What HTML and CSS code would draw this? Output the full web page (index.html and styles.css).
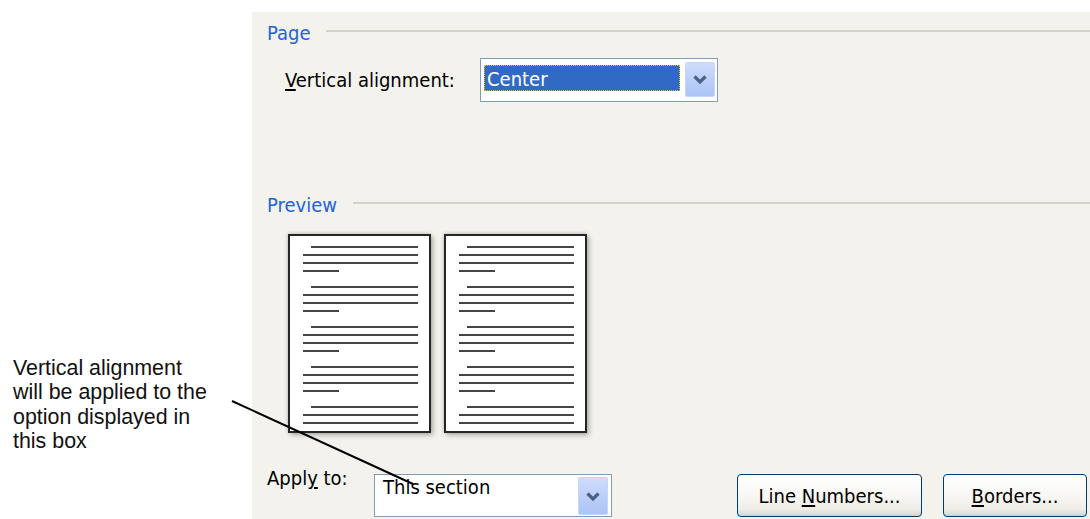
FILE: index.html
```html
<!DOCTYPE html>
<html lang="en">
<head>
<meta charset="utf-8">
<title>Page Setup – Layout</title>
<link rel="stylesheet" href="styles.css">
</head>
<body>
  <aside class="note">
    <p class="note-text">Vertical alignment<br>will be applied to the<br>option displayed in<br>this box</p>
  </aside>

  <main class="dialog">
    <section class="group">
      <div class="group-head"><span class="group-title">Page</span><i class="group-rule"></i></div>
      <div class="field-row">
        <label class="field-label"><u>V</u>ertical alignment:</label>
        <div class="combo combo-focus">
          <span class="combo-selection">Center</span>
          <span class="combo-button">
            <svg width="16" height="11" viewBox="0 0 16 11"><path d="M2.5 2.5 L8 8 L13.5 2.5" fill="none" stroke="#4d6185" stroke-width="3.2"/></svg>
          </span>
        </div>
      </div>
    </section>

    <section class="group group-preview">
      <div class="group-head"><span class="group-title">Preview</span><i class="group-rule"></i></div>
      <div class="previews">
        <div class="sheet">
          <div class="para"><i class="ln indent"></i><i class="ln"></i><i class="ln"></i><i class="ln short"></i></div>
          <div class="para"><i class="ln indent"></i><i class="ln"></i><i class="ln"></i><i class="ln short"></i></div>
          <div class="para"><i class="ln indent"></i><i class="ln"></i><i class="ln"></i><i class="ln short"></i></div>
          <div class="para"><i class="ln indent"></i><i class="ln"></i><i class="ln"></i><i class="ln short"></i></div>
          <div class="para"><i class="ln indent"></i><i class="ln"></i><i class="ln"></i></div>
        </div>
        <div class="sheet">
          <div class="para"><i class="ln indent"></i><i class="ln"></i><i class="ln"></i><i class="ln short"></i></div>
          <div class="para"><i class="ln indent"></i><i class="ln"></i><i class="ln"></i><i class="ln short"></i></div>
          <div class="para"><i class="ln indent"></i><i class="ln"></i><i class="ln"></i><i class="ln short"></i></div>
          <div class="para"><i class="ln indent"></i><i class="ln"></i><i class="ln"></i><i class="ln short"></i></div>
          <div class="para"><i class="ln indent"></i><i class="ln"></i><i class="ln"></i></div>
        </div>
      </div>
    </section>

    <div class="footer">
      <label class="apply-label">Appl<u>y</u> to:</label>
      <div class="combo combo-apply">
        <span class="combo-text">This section</span>
        <span class="combo-button">
          <svg width="16" height="11" viewBox="0 0 16 11"><path d="M2.5 2.5 L8 8 L13.5 2.5" fill="none" stroke="#4d6185" stroke-width="3.2"/></svg>
        </span>
      </div>
      <button class="btn btn-lines" type="button">Line <u>N</u>umbers...</button>
      <button class="btn btn-borders" type="button"><u>B</u>orders...</button>
    </div>
  </main>

  <svg class="pointer" width="1090" height="519" viewBox="0 0 1090 519">
    <line x1="232" y1="401" x2="413" y2="484" stroke="#000" stroke-width="2"/>
  </svg>
</body>
</html>
```

FILE: styles.css
```css
html, body {
  margin: 0;
  padding: 0;
}

body {
  position: relative;
  width: 1090px;
  height: 519px;
  overflow: hidden;
  display: flex;
  background: #ffffff;
}

/* Callout text on the left */
.note {
  width: 252px;
  flex: none;
  padding: 356px 0 0 13px;
  box-sizing: border-box;
}

.note-text {
  margin: 0;
  font-family: "Liberation Sans", Arial, sans-serif;
  font-size: 21.4px;
  line-height: 24.3px;
  color: #111;
}

/* Dialog body */
.dialog {
  flex: 1;
  margin-top: 12px;
  padding-top: 9px;
  background: #f3f2ec;
  font-family: "DejaVu Sans Condensed", "DejaVu Sans", sans-serif;
  font-stretch: condensed;
  font-size: 20px;
  color: #000;
}

.dialog u {
  text-decoration-thickness: 2px;
  text-underline-offset: 2px;
}

.group-head {
  display: flex;
  align-items: flex-start;
  height: 24px;
  padding-left: 15px;
}

.group-title {
  line-height: 24px;
  color: #2463d6;
}

.group-rule {
  flex: 1;
  height: 2px;
  margin: 9px 0 0 16px;
  background: #d5d4c4;
}

.field-row {
  display: flex;
  align-items: center;
  margin-top: 13px;
  padding-left: 33px;
}

.field-label {
  width: 195px;
  line-height: 24px;
}

/* Combo boxes */
.combo {
  box-sizing: border-box;
  display: flex;
  background: #fff;
  border: 1px solid #7f9db9;
}

.combo-focus {
  width: 238px;
  height: 44px;
  padding: 3px 2px 0 3px;
  align-items: flex-start;
}

.combo-selection {
  box-sizing: border-box;
  flex: 1;
  height: 26px;
  margin-top: 3px;
  padding-left: 3px;
  line-height: 28px;
  color: #fff;
  background: #316ac5;
  outline: 1px dotted #e7b54a;
  outline-offset: -1px;
  overflow: hidden;
}

.combo-button {
  box-sizing: border-box;
  flex: none;
  width: 30px;
  display: flex;
  align-items: center;
  justify-content: center;
  border: 1px solid #c6d5fb;
  border-radius: 2px;
  background: linear-gradient(180deg, #cfdcfc 0%, #b9cdf8 60%, #aec4f6 100%);
}

.combo-focus .combo-button {
  height: 35px;
  margin-left: 5px;
}

.group-preview {
  margin-top: 91px;
}

.previews {
  display: flex;
  gap: 13px;
  margin-top: 17px;
  padding-left: 36px;
}

/* Miniature page sheets */
.sheet {
  box-sizing: border-box;
  width: 143px;
  height: 199px;
  padding: 10px 11px 0 13px;
  display: flex;
  flex-direction: column;
  gap: 14px;
  overflow: hidden;
  background: #fff;
  border: 2px solid #262626;
  box-shadow: 2px 2px 5px rgba(0, 0, 0, 0.3), -1px -1px 3px rgba(0, 0, 0, 0.12);
}

.para {
  display: flex;
  flex-direction: column;
  gap: 6px;
}

.ln {
  display: block;
  height: 2px;
  background: #444;
}

.ln.indent {
  margin-left: 8px;
}

.ln.short {
  width: 36px;
}

/* Bottom row */
.footer {
  display: flex;
  align-items: flex-start;
  margin-top: 33px;
  padding-left: 15px;
}

.apply-label {
  width: 107px;
  line-height: 24px;
}

.combo-apply {
  width: 238px;
  height: 43px;
  margin-top: 8px;
  padding: 2px 3px 1px 8px;
  align-items: stretch;
}

.combo-text {
  flex: 1;
  margin-top: -2px;
  line-height: 24px;
}

.btn {
  box-sizing: border-box;
  height: 43px;
  margin-top: 8px;
  padding: 0;
  font: inherit;
  color: #000;
  border: 1px solid #003c74;
  border-radius: 4px;
  background: linear-gradient(180deg, #ffffff 0%, #f7f6f2 55%, #ecebe5 85%, #d8d4cb 100%);
  box-shadow: inset 0 -1px 0 #d6d0c5;
}

.btn-lines {
  width: 185px;
  margin-left: 125px;
}

.btn-borders {
  width: 144px;
  margin-left: 21px;
}

/* Callout leader line drawn over everything */
.pointer {
  position: absolute;
  left: 0;
  top: 0;
  pointer-events: none;
}
```
